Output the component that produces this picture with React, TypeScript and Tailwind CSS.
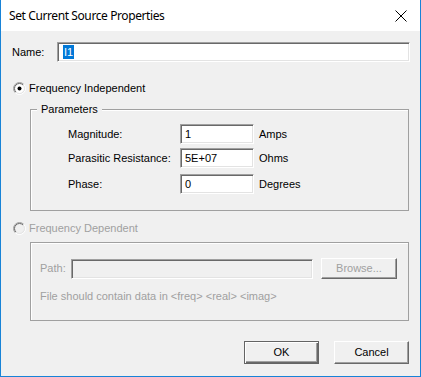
import React from "react";

function Radio({ checked, disabled }: { checked?: boolean; disabled?: boolean }) {
  return (
    <svg width="13" height="13" viewBox="0 0 13 13" className="shrink-0">
      <circle cx="6.5" cy="6.5" r="5" fill={disabled ? "#f0f0f0" : "#ffffff"} />
      <path d="M2.257 10.743 A6 6 0 0 1 10.743 2.257" stroke="#a0a0a0" strokeWidth="1" fill="none" />
      <path d="M10.743 2.257 A6 6 0 0 1 2.257 10.743" stroke="#ffffff" strokeWidth="1" fill="none" />
      <path d="M2.964 10.036 A5 5 0 0 1 10.036 2.964" stroke="#696969" strokeWidth="1" fill="none" />
      <path d="M10.036 2.964 A5 5 0 0 1 2.964 10.036" stroke="#e3e3e3" strokeWidth="1" fill="none" />
      {checked && <circle cx="6.5" cy="6.5" r="2" fill="#000000" />}
    </svg>
  );
}

function Field({ children, className = "", disabled }: { children?: React.ReactNode; className?: string; disabled?: boolean }) {
  return (
    <div
      className={`h-[20px] flex items-center border border-t-[#a0a0a0] border-l-[#a0a0a0] border-b-white border-r-white shadow-[inset_1px_1px_0_#696969,inset_-1px_-1px_0_#e3e3e3] ${disabled ? "bg-[#f0f0f0]" : "bg-white"} ${className}`}
    >
      {children}
    </div>
  );
}

function Row({ label, value, unit, className = "" }: { label: string; value: string; unit: string; className?: string }) {
  return (
    <div className={`flex items-center ${className}`}>
      <span className="w-[112px]">{label}</span>
      <Field className="w-[74px] pl-[4px]">{value}</Field>
      <span className="ml-[5px]">{unit}</span>
    </div>
  );
}

export default function App() {
  return (
    <div
      className="w-[421px] h-[377px] border-x border-b border-[#1883d7] bg-[#f0f0f0] flex flex-col text-[11px] leading-[13px] text-black"
      style={{ fontFamily: '"Liberation Sans", Arial, sans-serif' }}
    >
      <div className="h-[31px] bg-white flex items-center justify-between pl-[8px] pr-[13px] shrink-0">
        <span className="text-[12px] tracking-[-0.4px]" style={{ fontFamily: '"Noto Sans", "Open Sans", sans-serif' }}>
          Set Current Source Properties
        </span>
        <svg width="12" height="12" viewBox="0 0 12 12">
          <path d="M0.5 0.5 L11.5 11.5 M11.5 0.5 L0.5 11.5" stroke="#000" strokeWidth="1" />
        </svg>
      </div>

      <div className="flex-1 flex flex-col pl-[11px] pr-[10px] pt-[11px]">
        <div className="flex items-center">
          <span className="w-[45px]">Name:</span>
          <Field className="flex-1 pl-[5px]">
            <span className="bg-[#0078d7] text-white px-[1px] leading-[14px]">I1</span>
          </Field>
        </div>

        <div className="flex items-center mt-[20px] ml-[1px] h-[13px]">
          <Radio checked />
          <span className="ml-[3px]">Frequency Independent</span>
        </div>

        <div className="relative ml-[18px] mr-[1px] mt-[14px] h-[102px] border border-[#a0a0a0] shadow-[inset_1px_1px_0_#ffffff] flex flex-col pl-[37px] pt-[14px]">
          <span className="absolute left-[6px] top-[-1px] -translate-y-1/2 bg-[#f0f0f0] px-[4px]">Parameters</span>
          <Row label="Magnitude:" value="1" unit="Amps" />
          <Row label="Parasitic Resistance:" value="5E+07" unit="Ohms" className="mt-[4px]" />
          <Row label="Phase:" value="0" unit="Degrees" className="mt-[6px]" />
        </div>

        <div className="flex items-center mt-[11px] ml-[1px] h-[13px] text-[#a0a0a0]">
          <Radio disabled />
          <span className="ml-[3px]">Frequency Dependent</span>
        </div>

        <div className="ml-[18px] mr-[1px] mt-[7px] h-[79px] border border-[#a0a0a0] shadow-[inset_1px_1px_0_#ffffff] flex flex-col pl-[9px] pt-[15px] text-[#a0a0a0]">
          <div className="flex items-center">
            <span className="w-[31px]">Path:</span>
            <Field disabled className="w-[242px]" />
            <div className="ml-[8px] w-[76px] h-[21px] flex items-center justify-center border border-t-white border-l-white border-b-[#696969] border-r-[#696969] shadow-[inset_-1px_-1px_0_#a0a0a0]">
              Browse...
            </div>
          </div>
          <div className="mt-[11px]">File should contain data in &lt;freq&gt; &lt;real&gt; &lt;imag&gt;</div>
        </div>

        <div className="flex justify-end gap-[15px] mt-[20px] mr-[1px]">
          <div className="w-[75px] h-[23px] flex items-center justify-center border border-[#646464] shadow-[inset_1px_1px_0_#ffffff,inset_-1px_-1px_0_#696969,inset_-2px_-2px_0_#a0a0a0]">
            OK
          </div>
          <div className="w-[75px] h-[23px] flex items-center justify-center border border-t-white border-l-white border-b-[#696969] border-r-[#696969] shadow-[inset_-1px_-1px_0_#a0a0a0]">
            Cancel
          </div>
        </div>
      </div>
    </div>
  );
}
